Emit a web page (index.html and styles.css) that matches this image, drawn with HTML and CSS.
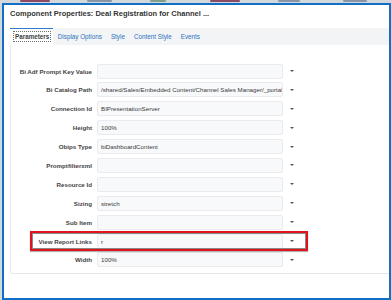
FILE: index.html
```html
<!DOCTYPE html>
<html lang="en">
<head>
    <meta charset="UTF-8">
    <meta name="viewport" content="width=device-width, initial-scale=1.0">
    <title>Component Properties</title>

    <link rel="stylesheet" href="styles.css">
</head>
<body>

    <!-- Bit of the page behind the dialog -->
    <div class="strip">
        <span class="blob b1"></span>
        <span class="blob b2"></span>
        <span class="blob b3"></span>
        <span class="blob b4"></span>
        <span class="blob b5"></span>
        <span class="blob b6"></span>
    </div>

    <div class="dialog">
        <div class="dialog-title">Component Properties: Deal Registration for Channel ...</div>

        <div class="tabs">
            <div class="tab active"><span class="focus">Parameters</span></div>
            <div class="tab">Display Options</div>
            <div class="tab">Style</div>
            <div class="tab">Content Style</div>
            <div class="tab">Events</div>
        </div>

        <div class="panel">
            <div class="form">
                <div class="label">Bi Adf Prompt Key Value</div>
                <div class="field"></div>
                <div class="arrow"></div>

                <div class="label">Bi Catalog Path</div>
                <div class="field">/shared/Sales/Embedded Content/Channel Sales Manager/_portal/Deal Registration</div>
                <div class="arrow"></div>

                <div class="label">Connection Id</div>
                <div class="field">BIPresentationServer</div>
                <div class="arrow"></div>

                <div class="label">Height</div>
                <div class="field">100%</div>
                <div class="arrow"></div>

                <div class="label">Obips Type</div>
                <div class="field">biDashboardContent</div>
                <div class="arrow"></div>

                <div class="label">Promptfilterxml</div>
                <div class="field"></div>
                <div class="arrow"></div>

                <div class="label">Resource Id</div>
                <div class="field"></div>
                <div class="arrow"></div>

                <div class="label">Sizing</div>
                <div class="field">stretch</div>
                <div class="arrow"></div>

                <div class="label">Sub Item</div>
                <div class="field"></div>
                <div class="arrow"></div>

                <div class="label">View Report Links</div>
                <div class="field">r</div>
                <div class="arrow"></div>

                <div class="label">Width</div>
                <div class="field">100%</div>
                <div class="arrow"></div>
            </div>

            <!-- Red annotation around the View Report Links row -->
            <div class="highlight"></div>
        </div>
    </div>

</body>
</html>
```

FILE: styles.css
```css
body {
    margin: 0;
    padding: 0;
    width: 391px;
    height: 300px;
    overflow: hidden;
    background-color: #d3d8dd;
    font-family: 'Liberation Sans', Arial, sans-serif;
}

.strip {
    height: 3px;
    display: flex;
    align-items: flex-start;
}

.blob {
    height: 2px;
    border-radius: 1px;
}

.b1 { margin-left: 20px; width: 30px; background: #8c4a66; }
.b2 { margin-left: 37px; width: 25px; background: #8795a6; }
.b3 { margin-left: 38px; width: 16px; background: #7ea08a; }
.b4 { margin-left: 44px; width: 30px; background: #8c4a66; }
.b5 { margin-left: 38px; width: 22px; background: #8795a6; }
.b6 { margin-left: 43px; width: 24px; background: #8795a6; }

.dialog {
    box-sizing: border-box;
    width: 389px;
    height: 297px;
    margin-left: 2px;
    border: 2px solid #1170c6;
    background-color: #fff;
}

.dialog-title {
    height: 23px;
    line-height: 18px;
    padding-left: 6px;
    font-size: 7.5px;
    font-weight: bold;
    color: #333;
    white-space: nowrap;
}

.tabs {
    display: flex;
    height: 17px;
    margin-left: 6px;
    background-color: #f2f4f5;
}

.tab {
    box-sizing: border-box;
    padding: 0 4.5px;
    line-height: 17px;
    font-size: 6.3px;
    color: #2f72c0;
    white-space: nowrap;
}

.tab.active {
    padding: 0 4px 0 5px;
    background-color: #fff;
    border-top: 1px solid #2a7ad0;
    line-height: 16px;
    color: #3a3f45;
    font-weight: bold;
}

.focus {
    outline: 1px dotted #6a6f75;
    outline-offset: 1px;
}

.panel {
    position: relative;
    margin-left: 6px;
    padding: 18.5px 0 5.5px;
    border-left: 1px solid #e6e8ea;
    border-bottom: 1px solid #e6e8ea;
    border-bottom-left-radius: 3px;
}

.form {
    display: grid;
    grid-template-columns: 81px 186px 8px;
    grid-auto-rows: 15px;
    column-gap: 5px;
    row-gap: 3.9px;
    align-items: center;
}

.label {
    text-align: right;
    font-size: 6.2px;
    font-weight: bold;
    color: #444;
    white-space: nowrap;
}

.field {
    box-sizing: border-box;
    height: 15px;
    padding-left: 3px;
    line-height: 13px;
    font-size: 6.2px;
    color: #3a3a3a;
    background-color: #f8f9fb;
    border: 1px solid #e9ebee;
    border-radius: 2px;
    white-space: nowrap;
    overflow: hidden;
}

.arrow {
    justify-self: center;
    width: 0;
    height: 0;
    border-left: 2px solid transparent;
    border-right: 2px solid transparent;
    border-top: 2.5px solid #555;
}

.highlight {
    position: absolute;
    top: 185.7px;
    left: 19px;
    box-sizing: border-box;
    width: 278px;
    height: 20.3px;
    border: 2px solid #e0141c;
    box-shadow: inset 0 0 0 1px #8a8a8a, 0 1px 1px rgba(0, 0, 0, 0.3);
}
```
